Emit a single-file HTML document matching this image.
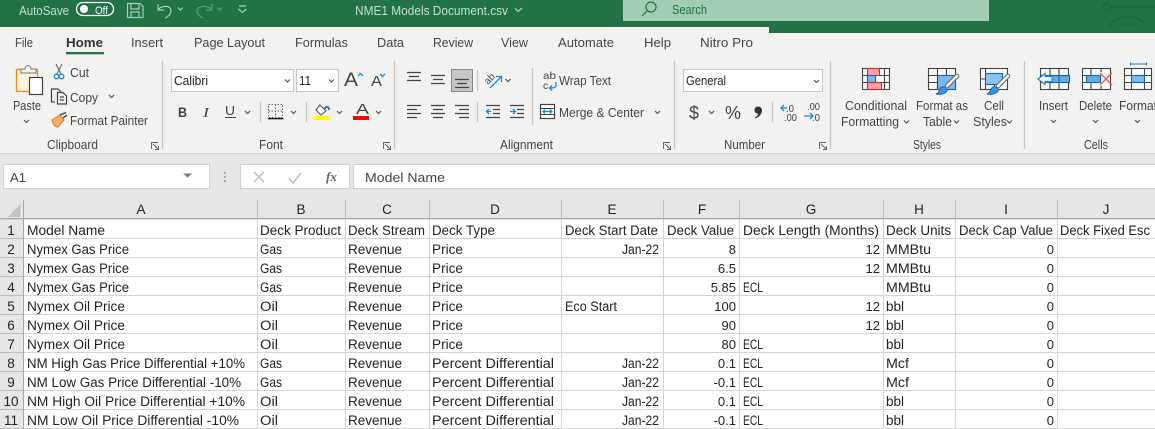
<!DOCTYPE html>
<html><head><meta charset="utf-8"><title>NME1 Models Document.csv</title>
<style>
html,body{margin:0;padding:0;width:1155px;height:429px;overflow:hidden;background:#fff}
svg{display:block}
text{font-family:"Liberation Sans",sans-serif;font-size:13px;fill:#444;white-space:pre}
.c text{font-size:13.5px;fill:#222}
.c text.e{text-anchor:end;font-size:13px}
.m{text-anchor:middle}
.t text{fill:#c6ded0}
.ch{fill:none;stroke:#555;stroke-width:1.2}
.l{fill:none;stroke:#444;stroke-width:1.2}
.b{fill:none;stroke:#1e86d8;stroke-width:1.3}
.sep{stroke:#c4c4c2;stroke-width:1.3}
</style></head><body>
<svg width="1155" height="429" viewBox="0 0 1155 429" xmlns="http://www.w3.org/2000/svg">
<!-- title bar -->
<rect width="1155" height="429" fill="#e6e6e6"/>
<rect width="1155" height="33" fill="#217346"/>
<rect y="27" width="769" height="6" fill="#f3f2f1"/>
<rect x="52" y="27" width="1" height="6" fill="#217346"/>
<rect x="623" width="366" height="21" fill="#a0cdb4"/>
<g fill="none" stroke="#1c6a3f" stroke-width="2.5"><circle cx="1107" cy="7" r="3.5"/><path d="M1111 7H1155M1110 26C1114 14 1141 14 1145 26M1121 25H1135"/></g>
<g class="t">
<text x="19" y="15" textLength="50" lengthAdjust="spacingAndGlyphs">AutoSave</text>
<text x="95" y="14" textLength="13" lengthAdjust="spacingAndGlyphs" style="font-size:11px;fill:#fff">Off</text>
<text x="355" y="15" textLength="153" lengthAdjust="spacingAndGlyphs">NME1 Models Document.csv</text>
<text x="672" y="14" textLength="35" lengthAdjust="spacingAndGlyphs" style="fill:#217346;font-size:12.500px">Search</text>
</g>
<rect x="76.500" y="2.500" width="37" height="13" rx="6.500" fill="none" stroke="#fff" stroke-width="1.300"/>
<circle cx="84" cy="9" r="4" fill="#fff"/>
<g fill="none" stroke="#a9cdb9" stroke-width="1.200">
<path d="M127.500 3.500H140L143 6.500V17.500H127.500ZM131 3.500V9H139V3.500M131 17.500V12H139V17.500"/>
<path d="M158 4V10H164M158 10C161 5 171 5 171 11C171 14 168 17 165 18"/>
<path d="M178 7.500L180.500 10L183 7.500"/>
<path d="M239 6H246M238.500 9L242.500 12.500L246.500 9"/>
<path d="M515 8L518 11.500L522 8"/>
</g>
<g fill="none" stroke="#5d9d7b" stroke-width="1.200"><path d="M212 4V10H206M212 10C209 5 197 5 197 11C197 14 200 17 203 18"/><path d="M217 7.500L219.500 10L222 7.500"/></g>
<g fill="none" stroke="#217346" stroke-width="1.200"><circle cx="651" cy="7" r="5"/><path d="M647 11L642 16"/></g>

<!-- ribbon -->
<rect y="33" width="1155" height="120" fill="#f3f2f1"/>
<rect y="27" width="769" height="10" fill="#f3f2f1"/>
<rect y="153" width="1155" height="1" fill="#d4d4d4"/>
<rect y="154" width="1155" height="2" fill="#e0e0e0"/>

<text x="15" y="47" textLength="18" lengthAdjust="spacingAndGlyphs">File</text>
<text x="66" y="47" textLength="37" lengthAdjust="spacingAndGlyphs" style="font-weight:bold;fill:#333">Home</text>
<rect x="66" y="52" width="38" height="2.300" fill="#217346"/>
<text x="131" y="47" textLength="32" lengthAdjust="spacingAndGlyphs">Insert</text>
<text x="194" y="47" textLength="71" lengthAdjust="spacingAndGlyphs">Page Layout</text>
<text x="295" y="47" textLength="53" lengthAdjust="spacingAndGlyphs">Formulas</text>
<text x="377" y="47" textLength="27" lengthAdjust="spacingAndGlyphs">Data</text>
<text x="433" y="47" textLength="40" lengthAdjust="spacingAndGlyphs">Review</text>
<text x="501" y="47" textLength="27" lengthAdjust="spacingAndGlyphs">View</text>
<text x="558" y="47" textLength="56" lengthAdjust="spacingAndGlyphs">Automate</text>
<text x="644" y="47" textLength="27" lengthAdjust="spacingAndGlyphs">Help</text>
<text x="700" y="47" textLength="53" lengthAdjust="spacingAndGlyphs">Nitro Pro</text>

<!-- separators -->
<g class="sep"><path d="M162.500 61V149M394.500 61V149M674.500 61V149M830.500 61V149M1024.500 61V149"/>
<path d="M260.500 102V122M306.500 102V122M477.500 70V91M477.500 102V122M532.500 68V125M772.500 102V122"/></g>

<!-- clipboard -->
<rect x="16.500" y="69.500" width="21" height="22" fill="#fdf3df" stroke="#e58a1f" stroke-width="1.300"/>
<path d="M21 73V69H25C25 64.500 31 64.500 31 69H36V73Z" fill="#f3f2f1" stroke="#777"/>
<rect x="29.500" y="77.500" width="13" height="17" fill="#fff" stroke="#444" stroke-width="1.200"/>
<text x="13" y="110" textLength="28" lengthAdjust="spacingAndGlyphs" style="font-size:13px">Paste</text>
<path class="ch" d="M24 120L26.500 122.500L29 120"/>
<path fill="none" stroke="#666" stroke-width="1.100" d="M56 64L61 74M62 64L57 74"/>
<circle cx="56.500" cy="76.500" r="2.300" fill="none" stroke="#1e86d8" stroke-width="1.300"/><circle cx="61.500" cy="76.500" r="2.300" fill="none" stroke="#1e86d8" stroke-width="1.300"/>
<text x="70" y="77" textLength="19" lengthAdjust="spacingAndGlyphs">Cut</text>
<path class="l" d="M55 102H51.500V89H58L61 92M57.500 92.500H63L66.500 96V104H57.500ZM60 97H64M60 100H64"/>
<text x="70" y="102" textLength="28" lengthAdjust="spacingAndGlyphs">Copy</text>
<path class="ch" d="M109 95L111.500 97.500L114 95"/>
<path d="M52 120L60 115L64 120L58 127C55 127 53 124 52 120Z" fill="#f6b26b" stroke="#e5781d"/>
<path d="M60 115L66 112.500M63 118L67 115" stroke="#555" stroke-width="1.600" fill="none"/>
<text x="70" y="125" textLength="78" lengthAdjust="spacingAndGlyphs">Format Painter</text>
<text x="47" y="149" textLength="51" lengthAdjust="spacingAndGlyphs">Clipboard</text>

<!-- launcher icons -->
<g fill="none" stroke="#666" stroke-width="1">
<path d="M151.500 149V142.500H158M153 144L158.500 149.500M155 149.500H158.500V146"/>
<path d="M383.500 149V142.500H390M385 144L390.500 149.500M387 149.500H390.500V146"/>
<path d="M663.500 149V142.500H670M665 144L670.500 149.500M667 149.500H670.500V146"/>
<path d="M819.500 149V142.500H826M821 144L826.500 149.500M823 149.500H826.500V146"/>
</g>

<!-- font -->
<rect x="171.500" y="69.500" width="122" height="22" fill="#fff" stroke="#c8c6c4"/>
<rect x="296.500" y="69.500" width="42" height="22" fill="#fff" stroke="#c8c6c4"/>
<text x="174" y="85" textLength="34" lengthAdjust="spacingAndGlyphs" style="fill:#222">Calibri</text>
<text x="299" y="85" textLength="12" lengthAdjust="spacingAndGlyphs" style="fill:#222">11</text>
<path class="ch" d="M285 79.500L287.500 82L290 79.500M329 79.500L331.500 82L334 79.500"/>
<text x="344" y="86" textLength="14" lengthAdjust="spacingAndGlyphs" style="font-size:19px;fill:#444">A</text>
<text x="371" y="86" textLength="11" lengthAdjust="spacingAndGlyphs" style="font-size:15px;fill:#444">A</text>
<path class="b" d="M358 76L360.500 73.500L363 76M380 74L382.500 76.500L385 74"/>
<text x="178" y="117" textLength="9" lengthAdjust="spacingAndGlyphs" style="font-weight:bold;font-size:14px">B</text>
<text x="203" y="117" textLength="6" lengthAdjust="spacingAndGlyphs" style="font-style:italic;font-size:14px;font-family:'Liberation Serif',serif">I</text>
<text x="225" y="115" textLength="10" lengthAdjust="spacingAndGlyphs" style="font-size:13px">U</text>
<rect x="225" y="117" width="11" height="1" fill="#444"/>
<path class="ch" d="M245 111L247.500 113.500L250 111M291 111L293.500 113.500L296 111M337 111L339.500 113.500L342 111M376 111L378.500 113.500L381 111"/>
<path fill="none" stroke="#666" stroke-width="1" stroke-dasharray="1.500 1.500" d="M268.500 104.500H282.500V117.500H268.500ZM275.500 104.500V117.500M268.500 111H282.500"/>
<rect x="268" y="118" width="15.500" height="1.300" fill="#111"/>
<path d="M320 105L326 111L321 115L316 110Z" fill="#fff" stroke="#555" stroke-width="1.100"/>
<path d="M325 109C325 106 329 106 329 110" fill="none" stroke="#1b6fb8" stroke-width="1.800"/>
<rect x="314" y="116" width="16" height="4" fill="#ffff00"/>
<text x="356" y="114" textLength="13" lengthAdjust="spacingAndGlyphs" style="font-size:15px">A</text>
<rect x="353" y="116" width="16" height="4" fill="#f00"/>
<text x="259" y="149" textLength="24" lengthAdjust="spacingAndGlyphs">Font</text>

<!-- alignment -->
<rect x="451.500" y="69.500" width="21" height="22" fill="#c8c6c4" stroke="#8a8886"/>
<path class="l" d="M407 72.500H421M409 76.500H419M407 80.500H421M431 75.500H445M433 79.500H443M431 83.500H445M455 79.500H469M457 83.500H467M455 87.500H469"/>
<path class="l" d="M407 105.500H421M407 109.500H417M407 113.500H421M407 117.500H417M431 105.500H445M433 109.500H443M431 113.500H445M433 117.500H443M455 105.500H469M459 109.500H469M455 113.500H469M459 117.500H469"/>
<path class="l" d="M486 105.500H500M493 109.500H500M493 113.500H500M486 117.500H500M510 105.500H524M517 109.500H524M517 113.500H524M510 117.500H524"/>
<path class="b" d="M491 111.500H486.500M489 109L486.500 111.500L489 114M510 111.500H515M513 109L515.500 111.500L513 114"/>
<text x="485" y="82" style="font-size:10px" transform="rotate(-45 490 80)">ab</text>
<path class="b" d="M490 88L501 77M496 76.500H501.500V82"/>
<path class="ch" d="M505.500 79L508 81.500L510.500 79"/>
<text x="543" y="79" style="font-size:10.500px" textLength="13" lengthAdjust="spacingAndGlyphs">ab</text>
<text x="543" y="89" style="font-size:10.500px">c</text>
<path class="b" d="M556 82V85C556 88 553 88 549.500 88M552 85.500L549.500 88L552 90.500"/>
<text x="559" y="85" textLength="52" lengthAdjust="spacingAndGlyphs">Wrap Text</text>
<rect x="540.500" y="104.500" width="14" height="14" fill="#fff" stroke="#444" stroke-width="1.200"/>
<path stroke="#444" d="M541 108.500H554M541 114.500H554"/>
<path class="b" d="M543 111.500H552M545 109.500L543 111.500L545 113.500M550 109.500L552 111.500L550 113.500"/>
<text x="559" y="117" textLength="85" lengthAdjust="spacingAndGlyphs">Merge &amp; Center</text>
<path class="ch" d="M655 111L657.500 113.500L660 111"/>
<text x="500" y="149" textLength="53" lengthAdjust="spacingAndGlyphs">Alignment</text>

<!-- number -->
<rect x="683.500" y="69.500" width="139" height="22" fill="#fff" stroke="#c8c6c4"/>
<text x="686" y="85" textLength="40" lengthAdjust="spacingAndGlyphs" style="fill:#222">General</text>
<path class="ch" d="M814 80L816.500 82.500L819 80"/>
<text x="689" y="119" textLength="10" lengthAdjust="spacingAndGlyphs" style="font-size:18px">$</text>
<path class="ch" d="M709 111L711.500 113.500L714 111"/>
<text x="725" y="119" textLength="16" lengthAdjust="spacingAndGlyphs" style="font-size:18px">%</text>
<path d="M758 106.500C761 106.500 762 109 762 110.500C762 114 759 117 755.500 118.500L755 117.500C757 116.500 758 115 758 113.500C755.500 113.500 754.500 112 754.500 110C754.500 108 756 106.500 758 106.500Z" fill="#333"/>
<text x="786" y="112" textLength="8" lengthAdjust="spacingAndGlyphs" style="font-size:10px">.0</text>
<text x="784" y="121" textLength="13" lengthAdjust="spacingAndGlyphs" style="font-size:10px">.00</text>
<text x="807" y="110" textLength="13" lengthAdjust="spacingAndGlyphs" style="font-size:10px">.00</text>
<text x="812" y="121" textLength="8" lengthAdjust="spacingAndGlyphs" style="font-size:10px">.0</text>
<path class="b" d="M787 108H781M784 105L781 108L784 111M804 116H813M810 113L813 116L810 119"/>
<text x="724" y="149" textLength="41" lengthAdjust="spacingAndGlyphs">Number</text>

<!-- styles icons -->
<g stroke="#444" stroke-width="1.100">
<rect x="862.500" y="68.500" width="27" height="21" fill="#f9f9f9"/>
<path fill="none" d="M884.500 69V89M875.500 69V89M862.500 75.500H890M862.500 82.500H890"/>
<rect x="867.500" y="68.500" width="12" height="7" fill="#fb9fa7" stroke="#d6262b"/>
<rect x="867.500" y="75.500" width="8" height="7" fill="#7fb6e8" stroke="#1069b6"/>
<rect x="867.500" y="82.500" width="14" height="7" fill="#fb9fa7" stroke="#d6262b"/>

<rect x="928.500" y="68.500" width="27" height="21" fill="#f9f9f9"/>
<rect x="937.500" y="75.500" width="18" height="14" fill="#7db7ec" stroke="#1069b6"/>
<path fill="none" d="M928.500 75.500H937M928.500 82.500H937M937.500 69V89M946.500 69V75"/>

<rect x="980.500" y="68.500" width="27" height="21" fill="#f9f9f9"/>
<path fill="none" d="M985.500 69V89M994.500 85V89M980.500 79H985"/>
<rect x="985.500" y="73.500" width="17" height="11" fill="#8cc0ef" stroke="#1069b6"/>

<rect x="1040.500" y="68.500" width="28" height="21" fill="#f9f9f9"/>
<path fill="none" d="M1040.500 75.500H1068M1040.500 82.500H1068M1050 69V89M1059 69V89"/>
<rect x="1045" y="75.500" width="24.500" height="7" fill="#68a9e0" stroke="#0f66b0"/>
<path fill="none" stroke="#0f66b0" d="M1059 76V82"/>

<rect x="1082.500" y="68.500" width="28" height="21" fill="#f9f9f9"/>
<path fill="none" d="M1082.500 75.500H1098M1082.500 82.500H1098M1091 69V75M1091 82V89M1101 69V72M1101 86V89"/>
<rect x="1086.500" y="75.500" width="14" height="7" fill="#68a9e0" stroke="#0f66b0"/>

<rect x="1124.500" y="68.500" width="27" height="21" fill="#f9f9f9"/>
<rect x="1131.500" y="75.500" width="13" height="7" fill="#7db7ec" stroke="#1069b6"/>
<path fill="none" d="M1124.500 75.500H1131M1124.500 82.500H1131M1145 75.500H1151M1145 82.500H1151M1131.500 69V75M1131.500 83V89M1144.500 69V75M1144.500 83V89"/>
</g>
<path d="M1038 79L1045 73.500V76.500H1052V81.500H1045V84.500Z" fill="#fff" stroke="#1e86d8" stroke-width="1.200"/>
<path d="M1100 73L1112 85M1112 73L1100 85" stroke="#ef5350" stroke-width="1.300" fill="none"/>
<path d="M1130.500 64H1146.500M1130.500 62.500V65.500M1146.500 62.500V65.500" stroke="#1277c6" fill="none"/>
<!-- brushes -->
<g fill="none">
<path d="M936 94C940 93 939 88 942 87C945 86 948 88 947 91C945 94 940 95 936 94Z" fill="#3f94dc" stroke="#1069b6"/><path d="M947 86L957 76" stroke="#666" stroke-width="4.500" stroke-linecap="round"/><path d="M947 86L957 76" stroke="#fff" stroke-width="2.500" stroke-linecap="round"/>
<path d="M987 94C991 93 990 88 993 87C996 86 999 88 998 91C996 94 991 95 987 94Z" fill="#3f94dc" stroke="#1069b6"/><path d="M998 86L1008 76" stroke="#666" stroke-width="4.500" stroke-linecap="round"/><path d="M998 86L1008 76" stroke="#fff" stroke-width="2.500" stroke-linecap="round"/>
</g>
<text x="845" y="110" textLength="62" lengthAdjust="spacingAndGlyphs">Conditional</text>
<text x="841" y="126" textLength="58" lengthAdjust="spacingAndGlyphs">Formatting</text>
<text x="916" y="110" textLength="52" lengthAdjust="spacingAndGlyphs">Format as</text>
<text x="923" y="126" textLength="29" lengthAdjust="spacingAndGlyphs">Table</text>
<text x="984" y="110" textLength="20" lengthAdjust="spacingAndGlyphs">Cell</text>
<text x="973" y="126" textLength="34" lengthAdjust="spacingAndGlyphs">Styles</text>
<text x="1039" y="110" textLength="29" lengthAdjust="spacingAndGlyphs">Insert</text>
<text x="1079" y="110" textLength="33" lengthAdjust="spacingAndGlyphs">Delete</text>
<text x="1119" y="110" textLength="38" lengthAdjust="spacingAndGlyphs">Format</text>
<text x="913" y="149" textLength="28" lengthAdjust="spacingAndGlyphs">Styles</text>
<text x="1084" y="149" textLength="24" lengthAdjust="spacingAndGlyphs">Cells</text>
<path class="ch" d="M904 120.500L906.500 123L909 120.500M954 120.500L956.500 123L959 120.500M1007 120.500L1009.500 123L1012 120.500M1051 120L1053.500 122.500L1056 120M1093 120L1095.500 122.500L1098 120M1135 120L1137.500 122.500L1140 120"/>

<!-- formula bar -->
<rect x="3.500" y="164.500" width="206" height="24" fill="#fff" stroke="#d2d0ce"/>
<rect x="240.500" y="164.500" width="109" height="24" fill="#fff" stroke="#d2d0ce"/>
<rect x="353.500" y="164.500" width="802" height="24" fill="#fff" stroke="#d2d0ce"/>
<text x="10" y="182" textLength="16" lengthAdjust="spacingAndGlyphs" style="font-size:13px">A1</text>
<path d="M183 173.500H192L187.500 177.500Z" fill="#777"/>
<g fill="#aaa"><rect x="224" y="172" width="2" height="2"/><rect x="224" y="176" width="2" height="2"/><rect x="224" y="180" width="2" height="2"/></g>
<path d="M254 172L264 182M264 172L254 182M289 178L293 183L301 173" fill="none" stroke="#bdbdbd" stroke-width="1.500"/>
<text x="326" y="181" style="font-family:'Liberation Serif',serif;font-style:italic;font-weight:bold;font-size:13px;fill:#666" textLength="11" lengthAdjust="spacingAndGlyphs">fx</text>
<text x="365" y="182" textLength="80" lengthAdjust="spacingAndGlyphs">Model Name</text>

<!-- grid -->
<rect y="199" width="1155" height="20" fill="#e6e6e6"/>
<rect x="23" y="219" width="1132" height="210" fill="#fff"/>
<path d="M8 217H20.500V204Z" fill="#c2c2c2"/>
<path stroke="#d4d4d4" fill="none" d="M23 238.500H1155M23 257.500H1155M23 276.500H1155M23 295.500H1155M23 314.500H1155M23 333.500H1155M23 352.500H1155M23 371.500H1155M23 390.500H1155M23 409.500H1155M23 428.500H1155M257.500 219V429M345.500 219V429M429.500 219V429M561.500 219V429M663.500 219V429M739.500 219V429M883.500 219V429M955.500 219V429M1057.500 219V429"/>
<path stroke="#bdbdbd" fill="none" d="M23.500 200V219M257.500 200V219M345.500 200V219M429.500 200V219M561.500 200V219M663.500 200V219M739.500 200V219M883.500 200V219M955.500 200V219M1057.500 200V219M0 238.500H23M0 257.500H23M0 276.500H23M0 295.500H23M0 314.500H23M0 333.500H23M0 352.500H23M0 371.500H23M0 390.500H23M0 409.500H23M0 428.500H23"/>
<rect y="218" width="1155" height="1.300" fill="#a6a6a6"/>
<rect x="23" y="200" width="1" height="229" fill="#a6a6a6"/>

<g class="c">
<g class="m">
<text x="141" y="214">A</text><text x="301" y="214">B</text><text x="387" y="214">C</text><text x="495" y="214">D</text><text x="612" y="214">E</text><text x="702" y="214">F</text><text x="811" y="214">G</text><text x="919" y="214">H</text><text x="1006" y="214">I</text><text x="1106" y="214">J</text>
<text x="11" y="235">1</text><text x="11" y="254">2</text><text x="11" y="273">3</text><text x="11" y="292">4</text><text x="11" y="311">5</text><text x="11" y="330">6</text><text x="11" y="349">7</text><text x="11" y="368">8</text><text x="11" y="387">9</text><text x="11" y="406">10</text><text x="11" y="425">11</text>
</g>
<text x="27" y="235" textLength="78" lengthAdjust="spacingAndGlyphs">Model Name</text><text x="260" y="235" textLength="81" lengthAdjust="spacingAndGlyphs">Deck Product</text><text x="348" y="235" textLength="77" lengthAdjust="spacingAndGlyphs">Deck Stream</text><text x="432" y="235" textLength="63" lengthAdjust="spacingAndGlyphs">Deck Type</text><text x="565" y="235" textLength="93" lengthAdjust="spacingAndGlyphs">Deck Start Date</text><text x="667" y="235" textLength="67" lengthAdjust="spacingAndGlyphs">Deck Value</text><text x="743" y="235" textLength="136" lengthAdjust="spacingAndGlyphs">Deck Length (Months)</text><text x="886" y="235" textLength="65" lengthAdjust="spacingAndGlyphs">Deck Units</text><text x="959" y="235" textLength="94" lengthAdjust="spacingAndGlyphs">Deck Cap Value</text><text x="1060" y="235" textLength="90" lengthAdjust="spacingAndGlyphs">Deck Fixed Esc</text>

<text x="27" y="254" textLength="102" lengthAdjust="spacingAndGlyphs">Nymex Gas Price</text><text x="260" y="254" textLength="22" lengthAdjust="spacingAndGlyphs">Gas</text><text x="348" y="254" textLength="54" lengthAdjust="spacingAndGlyphs">Revenue</text><text x="432" y="254" textLength="31" lengthAdjust="spacingAndGlyphs">Price</text><text x="622" y="254" textLength="37" lengthAdjust="spacingAndGlyphs">Jan-22</text><text x="736" y="254" class="e">8</text><text x="880" y="254" class="e">12</text><text x="886" y="254" textLength="45" lengthAdjust="spacingAndGlyphs">MMBtu</text><text x="1054" y="254" class="e">0</text>

<text x="27" y="273" textLength="102" lengthAdjust="spacingAndGlyphs">Nymex Gas Price</text><text x="260" y="273" textLength="22" lengthAdjust="spacingAndGlyphs">Gas</text><text x="348" y="273" textLength="54" lengthAdjust="spacingAndGlyphs">Revenue</text><text x="432" y="273" textLength="31" lengthAdjust="spacingAndGlyphs">Price</text><text x="736" y="273" class="e">6.5</text><text x="880" y="273" class="e">12</text><text x="886" y="273" textLength="45" lengthAdjust="spacingAndGlyphs">MMBtu</text><text x="1054" y="273" class="e">0</text>

<text x="27" y="292" textLength="102" lengthAdjust="spacingAndGlyphs">Nymex Gas Price</text><text x="260" y="292" textLength="22" lengthAdjust="spacingAndGlyphs">Gas</text><text x="348" y="292" textLength="54" lengthAdjust="spacingAndGlyphs">Revenue</text><text x="432" y="292" textLength="31" lengthAdjust="spacingAndGlyphs">Price</text><text x="736" y="292" class="e">5.85</text><text x="743" y="292" textLength="20" lengthAdjust="spacingAndGlyphs">ECL</text><text x="886" y="292" textLength="45" lengthAdjust="spacingAndGlyphs">MMBtu</text><text x="1054" y="292" class="e">0</text>

<text x="27" y="311" textLength="98" lengthAdjust="spacingAndGlyphs">Nymex Oil Price</text><text x="260" y="311" textLength="18" lengthAdjust="spacingAndGlyphs">Oil</text><text x="348" y="311" textLength="54" lengthAdjust="spacingAndGlyphs">Revenue</text><text x="432" y="311" textLength="31" lengthAdjust="spacingAndGlyphs">Price</text><text x="565" y="311" textLength="52" lengthAdjust="spacingAndGlyphs">Eco Start</text><text x="736" y="311" class="e">100</text><text x="880" y="311" class="e">12</text><text x="886" y="311" textLength="18" lengthAdjust="spacingAndGlyphs">bbl</text><text x="1054" y="311" class="e">0</text>

<text x="27" y="330" textLength="98" lengthAdjust="spacingAndGlyphs">Nymex Oil Price</text><text x="260" y="330" textLength="18" lengthAdjust="spacingAndGlyphs">Oil</text><text x="348" y="330" textLength="54" lengthAdjust="spacingAndGlyphs">Revenue</text><text x="432" y="330" textLength="31" lengthAdjust="spacingAndGlyphs">Price</text><text x="736" y="330" class="e">90</text><text x="880" y="330" class="e">12</text><text x="886" y="330" textLength="18" lengthAdjust="spacingAndGlyphs">bbl</text><text x="1054" y="330" class="e">0</text>

<text x="27" y="349" textLength="98" lengthAdjust="spacingAndGlyphs">Nymex Oil Price</text><text x="260" y="349" textLength="18" lengthAdjust="spacingAndGlyphs">Oil</text><text x="348" y="349" textLength="54" lengthAdjust="spacingAndGlyphs">Revenue</text><text x="432" y="349" textLength="31" lengthAdjust="spacingAndGlyphs">Price</text><text x="736" y="349" class="e">80</text><text x="743" y="349" textLength="20" lengthAdjust="spacingAndGlyphs">ECL</text><text x="886" y="349" textLength="18" lengthAdjust="spacingAndGlyphs">bbl</text><text x="1054" y="349" class="e">0</text>

<text x="27" y="368" textLength="218" lengthAdjust="spacingAndGlyphs">NM High Gas Price Differential +10%</text><text x="260" y="368" textLength="22" lengthAdjust="spacingAndGlyphs">Gas</text><text x="348" y="368" textLength="54" lengthAdjust="spacingAndGlyphs">Revenue</text><text x="432" y="368" textLength="122" lengthAdjust="spacingAndGlyphs">Percent Differential</text><text x="622" y="368" textLength="37" lengthAdjust="spacingAndGlyphs">Jan-22</text><text x="736" y="368" class="e">0.1</text><text x="743" y="368" textLength="20" lengthAdjust="spacingAndGlyphs">ECL</text><text x="886" y="368" textLength="23" lengthAdjust="spacingAndGlyphs">Mcf</text><text x="1054" y="368" class="e">0</text>

<text x="27" y="387" textLength="214" lengthAdjust="spacingAndGlyphs">NM Low Gas Price Differential -10%</text><text x="260" y="387" textLength="22" lengthAdjust="spacingAndGlyphs">Gas</text><text x="348" y="387" textLength="54" lengthAdjust="spacingAndGlyphs">Revenue</text><text x="432" y="387" textLength="122" lengthAdjust="spacingAndGlyphs">Percent Differential</text><text x="622" y="387" textLength="37" lengthAdjust="spacingAndGlyphs">Jan-22</text><text x="736" y="387" class="e">-0.1</text><text x="743" y="387" textLength="20" lengthAdjust="spacingAndGlyphs">ECL</text><text x="886" y="387" textLength="23" lengthAdjust="spacingAndGlyphs">Mcf</text><text x="1054" y="387" class="e">0</text>

<text x="27" y="406" textLength="218" lengthAdjust="spacingAndGlyphs">NM High Oil Price Differential +10%</text><text x="260" y="406" textLength="18" lengthAdjust="spacingAndGlyphs">Oil</text><text x="348" y="406" textLength="54" lengthAdjust="spacingAndGlyphs">Revenue</text><text x="432" y="406" textLength="122" lengthAdjust="spacingAndGlyphs">Percent Differential</text><text x="622" y="406" textLength="37" lengthAdjust="spacingAndGlyphs">Jan-22</text><text x="736" y="406" class="e">0.1</text><text x="743" y="406" textLength="20" lengthAdjust="spacingAndGlyphs">ECL</text><text x="886" y="406" textLength="18" lengthAdjust="spacingAndGlyphs">bbl</text><text x="1054" y="406" class="e">0</text>

<text x="27" y="425" textLength="212" lengthAdjust="spacingAndGlyphs">NM Low Oil Price Differential -10%</text><text x="260" y="425" textLength="18" lengthAdjust="spacingAndGlyphs">Oil</text><text x="348" y="425" textLength="54" lengthAdjust="spacingAndGlyphs">Revenue</text><text x="432" y="425" textLength="122" lengthAdjust="spacingAndGlyphs">Percent Differential</text><text x="622" y="425" textLength="37" lengthAdjust="spacingAndGlyphs">Jan-22</text><text x="736" y="425" class="e">-0.1</text><text x="743" y="425" textLength="20" lengthAdjust="spacingAndGlyphs">ECL</text><text x="886" y="425" textLength="18" lengthAdjust="spacingAndGlyphs">bbl</text><text x="1054" y="425" class="e">0</text>
</g>
</svg>
</body></html>
